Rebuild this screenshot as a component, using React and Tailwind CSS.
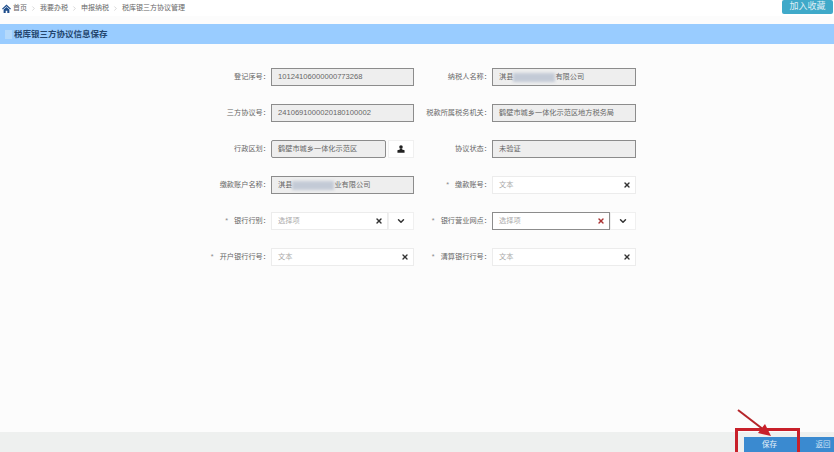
import React from "react";
import { ChevronRight, X, ChevronDown } from "lucide-react";

const FONT = { fontFamily: '"Liberation Sans", "Noto Sans CJK SC", sans-serif' };

// blurred-out part of a company name
const Redact = ({ w }) => (
  <span className="inline-block h-[9px] bg-[#c3cad6] blur-[1.5px] align-middle" style={{ width: w }} />
);

const Label = ({ required, text }) => (
  <div className="flex-1 flex justify-end items-center whitespace-nowrap text-[7.2px] text-[#666] pr-[1px]">
    {required && <span className="text-[#888] mr-[6px]">*</span>}
    {text}：
  </div>
);

const ReadOnly = ({ children, w = "w-[143px]", rounded }) => (
  <div className={`${w} h-[18px] shrink-0 flex items-center pl-[6px] bg-[#eeeeee] border border-[#8c8c8c] text-[7.2px] text-[#666] ${rounded ? "rounded-[2px]" : ""}`}>
    {children}
  </div>
);

const TextInput = ({ placeholder = "文本", w = "w-[143px]", dark, xRed }) => (
  <div className={`${w} h-[18px] shrink-0 flex items-center justify-between pl-[6px] pr-[4px] bg-white border ${dark ? "border-[#8c8c8c]" : "border-[#ececec]"} text-[7.2px] text-[#aaa]`}>
    {placeholder}
    <X size={8} strokeWidth={4} className={xRed ? "text-[#a33]" : "text-[#333]"} />
  </div>
);

const SideButton = ({ children }) => (
  <div className="w-[26px] h-[18px] shrink-0 flex items-center justify-center bg-white border border-[#f0f0f0] text-[#333]">
    {children}
  </div>
);

const Field = ({ label, required, children, w }) => (
  <div className={`${w} flex items-center`}>
    <Label required={required} text={label} />
    {children}
  </div>
);

const Row = ({ children }) => <div className="flex h-[18px]">{children}</div>;

const Crumb = () => <ChevronRight size={7} className="text-[#bbb] mx-[3px]" />;

export default function App() {
  return (
    <div className="relative w-[834px] h-[452px] overflow-hidden bg-[#fcfcfc] flex flex-col" style={FONT}>
      {/* breadcrumb */}
      <div className="h-[16px] flex items-center pl-[2px] pt-[1px] bg-white text-[7px] text-[#666]">
        <svg width="9" height="9" viewBox="0 0 10 10" className="mr-[2px]">
          <path d="M5 0.5L0 5.2L1 6L5 2.4L9 6L10 5.2Z" fill="#1f4e8c" />
          <path d="M1.8 6.2L5 3.4L8.2 6.2V10H5.9V7.4H4.1V10H1.8Z" fill="#1f4e8c" />
        </svg>
        <span>首页</span>
        <Crumb />
        <span>我要办税</span>
        <Crumb />
        <span>申报纳税</span>
        <Crumb />
        <span>税库银三方协议管理</span>
        <div className="ml-auto mr-[1px] -mt-[3px] w-[51px] h-[14px] flex items-center justify-center bg-[#3fa9c9] text-[9px] text-[#dfeef5] rounded-[2px]">
          加入收藏
        </div>
      </div>

      {/* title bar */}
      <div className="mt-[8px] h-[20px] flex items-center pl-[5px] bg-[#99ccff] text-[8.5px] font-bold text-[#24466e]">
        <div className="w-[7px] h-[9px] mr-[2px] bg-[#b4d9fb]" />
        税库银三方协议信息保存
      </div>

      {/* form */}
      <div className="flex-1 flex flex-col gap-[18px] pt-[24px]">
        <Row>
          <Field label="登记序号" w="w-[414px]"><ReadOnly><span className="text-[7.6px]">10124106000000773268</span></ReadOnly></Field>
          <Field label="纳税人名称" w="w-[222px]"><ReadOnly w="w-[144px]">淇县<Redact w={42} />有限公司</ReadOnly></Field>
        </Row>
        <Row>
          <Field label="三方协议号" w="w-[414px]"><ReadOnly><span className="text-[7.6px]">2410691000020180100002</span></ReadOnly></Field>
          <Field label="税款所属税务机关" w="w-[222px]"><ReadOnly w="w-[144px]">鹤壁市城乡一体化示范区地方税务局</ReadOnly></Field>
        </Row>
        <Row>
          <Field label="行政区划" w="w-[414px]">
            <ReadOnly w="w-[115px]" rounded>鹤壁市城乡一体化示范区</ReadOnly>
            <div className="w-[2px]" />
            <SideButton>
              <svg width="8" height="8" viewBox="0 0 8 9" fill="#222">
                <circle cx="4" cy="2.2" r="2" />
                <path d="M2.6 3.8H5.4L5.2 5.2L8 6V8.6H0V6L2.8 5.2Z" />
              </svg>
            </SideButton>
          </Field>
          <Field label="协议状态" w="w-[222px]"><ReadOnly w="w-[144px]">未验证</ReadOnly></Field>
        </Row>
        <Row>
          <Field label="缴款账户名称" w="w-[414px]"><ReadOnly>淇县<Redact w={42} />业有限公司</ReadOnly></Field>
          <Field label="缴款账号" required w="w-[222px]"><TextInput w="w-[144px]" /></Field>
        </Row>
        <Row>
          <Field label="银行行别" required w="w-[414px]">
            <TextInput placeholder="选择项" w="w-[117px]" />
            <SideButton><ChevronDown size={10} strokeWidth={3.5} /></SideButton>
          </Field>
          <Field label="银行营业网点" required w="w-[222px]">
            <TextInput placeholder="选择项" w="w-[118px]" dark xRed />
            <SideButton><ChevronDown size={10} strokeWidth={3.5} /></SideButton>
          </Field>
        </Row>
        <Row>
          <Field label="开户银行行号" required w="w-[414px]"><TextInput /></Field>
          <Field label="清算银行行号" required w="w-[222px]"><TextInput w="w-[144px]" /></Field>
        </Row>
      </div>

      {/* footer */}
      <div className="h-[20px] bg-[#eef0ef] flex items-end justify-end">
        <div className="w-[90px] h-[15px] flex items-center bg-[#3a8ad0] text-[7.5px]">
          <span className="w-[51px] text-center text-[#e6f1fa]">保存</span>
          <span className="ml-[17px] w-[22px] text-center text-[#cfe3f5]">返回</span>
        </div>
      </div>

      {/* red annotation */}
      <div className="absolute left-[735px] top-[428px] w-[65px] h-[30px] border-[3px] border-[#c8202a]" />
      <svg className="absolute left-[734px] top-[406px]" width="44" height="34" viewBox="0 0 44 34">
        <path d="M4 4L30 24" stroke="#b5252a" strokeWidth="2" fill="none" />
        <path d="M37 30L24 27L31 18Z" fill="#c8202a" />
      </svg>
    </div>
  );
}
